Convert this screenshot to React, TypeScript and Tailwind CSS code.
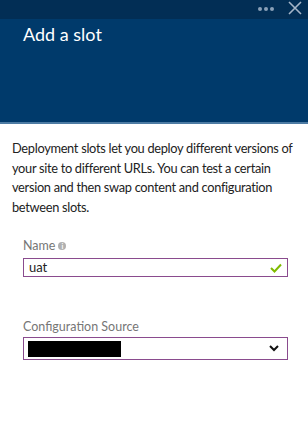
import React from "react";

export default function App() {
  return (
    <div className="w-[308px] h-[427px] bg-white overflow-hidden" style={{ fontFamily: 'Lato, "Open Sans", sans-serif' }}>
      <div className="h-[19px] bg-[#022e55] flex items-center justify-end pr-[6px] gap-[14px]">
        <div className="flex gap-[2px] mt-[-2px]">
          <span className="w-[4px] h-[4px] rounded-full bg-[#8aa0b8]" />
          <span className="w-[4px] h-[4px] rounded-full bg-[#8aa0b8]" />
          <span className="w-[4px] h-[4px] rounded-full bg-[#8aa0b8]" />
        </div>
        <svg width="14" height="14" viewBox="0 0 14 14" className="mt-[-3px]">
          <path d="M1 1 L13 13 M13 1 L1 13" stroke="#a5b5c8" strokeWidth="1.6" />
        </svg>
      </div>
      <div className="h-[105px] bg-[#003a6b] border-b-[2px] border-[#4d7ba3] pl-[23px] pt-[3px]">
        <div className="text-white text-[18px] leading-[24px]">Add a slot</div>
      </div>
      <div className="px-[12px] pt-[15px] text-[12.8px] tracking-[-0.3px] leading-[19.5px] text-[#222] whitespace-nowrap">
        Deployment slots let you deploy different versions of<br />
        your site to different URLs. You can test a certain<br />
        version and then swap content and configuration<br />
        between slots.
      </div>
      <div className="pl-[23px] pr-[20px] pt-[21px]">
        <div className="flex items-center gap-[3px] text-[12.5px] text-[#767676] leading-[16px]">
          Name
          <span className="w-[8px] h-[8px] rounded-full bg-[#b0b0b0] text-white text-[7px] leading-[8px] flex items-center justify-center font-bold">i</span>
        </div>
        <div className="mt-[4px] h-[19px] border border-[#8a4b8e] flex items-center justify-between px-[5px]">
          <span className="text-[13px] text-[#222]">uat</span>
          <svg width="12" height="10" viewBox="0 0 12 10">
            <path d="M1 5 L4.5 8.5 L11 1.5" stroke="#7fba00" strokeWidth="2" fill="none" />
          </svg>
        </div>
        <div className="mt-[42px] text-[12.5px] text-[#767676] leading-[16px]">Configuration Source</div>
        <div className="mt-[2px] h-[23px] border border-[#8a4b8e] flex items-center justify-between pl-[4px] pr-[8px]">
          <div className="w-[93px] h-[16px] bg-black" />
          <svg width="10" height="7" viewBox="0 0 10 7">
            <path d="M1 1 L5 5 L9 1" stroke="#111" strokeWidth="2" fill="none" />
          </svg>
        </div>
      </div>
    </div>
  );
}
